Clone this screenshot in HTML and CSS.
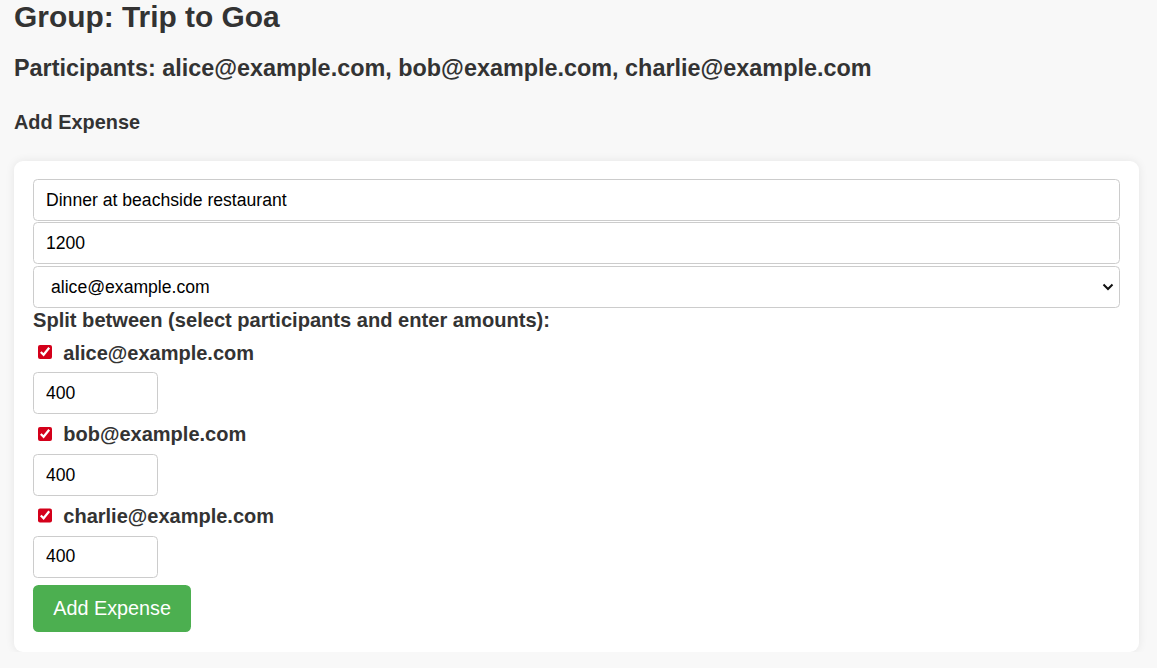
FILE: index.html
```html
<!DOCTYPE html>
<html lang="en">
<head>
<meta charset="utf-8">
<title>Trip to Goa</title>
<link rel="stylesheet" href="styles.css">
</head>
<body>
  <h1 class="group-title">Group: Trip to Goa</h1>
  <h2 class="participants">Participants: alice@example.com, bob@example.com, charlie@example.com</h2>
  <h3 class="section-title">Add Expense</h3>
  <form class="card">
    <input class="field" type="text" value="Dinner at beachside restaurant">
    <input class="field" type="text" value="1200">
    <div class="select-wrap">
      <select class="field select">
        <option>alice@example.com</option>
        <option>bob@example.com</option>
        <option>charlie@example.com</option>
      </select>
      <svg class="chevron" width="12" height="8" viewBox="0 0 12 8"><path d="M1.5 1.5 L6 6 L10.5 1.5" fill="none" stroke="#111" stroke-width="2"/></svg>
    </div>
    <label class="split-label">Split between (select participants and enter amounts):</label>
    <div class="participant">
      <label class="check-row"><input class="check" type="checkbox" checked>alice@example.com</label>
      <input class="amount" type="text" value="400">
    </div>
    <div class="participant">
      <label class="check-row"><input class="check" type="checkbox" checked>bob@example.com</label>
      <input class="amount" type="text" value="400">
    </div>
    <div class="participant">
      <label class="check-row"><input class="check" type="checkbox" checked>charlie@example.com</label>
      <input class="amount" type="text" value="400">
    </div>
    <button class="submit" type="button">Add Expense</button>
  </form>
</body>
</html>
```
FILE: styles.css
```css
html, body {
  margin: 0;
  padding: 0;
}
body {
  background: #f8f8f8;
  color: #333;
  font-family: "Liberation Sans", Arial, sans-serif;
  padding: 0 18px 0 14px;
}
.group-title {
  font-size: 29.9px;
  font-weight: bold;
  margin: 0 0 21px;
  line-height: 34px;
}
.participants {
  font-size: 23.4px;
  font-weight: bold;
  margin: 0 0 29px;
  line-height: 27px;
}
.section-title {
  font-size: 19.9px;
  font-weight: bold;
  margin: 0 0 27px;
  line-height: 23px;
}
.card {
  background: #fff;
  border-radius: 9px;
  box-shadow: 0 0 10px rgba(0, 0, 0, 0.08);
  padding: 18px 19px 19.5px;
  display: flex;
  flex-direction: column;
  align-items: flex-start;
}
.field {
  box-sizing: border-box;
  width: 100%;
  height: 42px;
  margin: 0 0 1.3px;
  padding: 0 12px;
  border: 1px solid #ccc;
  border-radius: 4.5px;
  background: #fff;
  color: #000;
  font-family: "Liberation Sans", Arial, sans-serif;
  font-size: 17.6px;
  outline: none;
}
.select-wrap {
  position: relative;
  width: 100%;
}
.select {
  appearance: none;
  -webkit-appearance: none;
  padding-left: 17px;
  display: block;
}
.chevron {
  position: absolute;
  right: 6px;
  top: 17px;
  pointer-events: none;
}
.split-label {
  font-size: 20.1px;
  font-weight: bold;
  line-height: 22.75px;
  margin: 0 0 1px;
}
.participant {
  display: flex;
  flex-direction: column;
  align-items: flex-start;
}
.check-row {
  display: flex;
  align-items: center;
  font-size: 20px;
  font-weight: bold;
  line-height: 22.75px;
  margin: 9px 0 8px;
}
.check {
  width: 14.3px;
  height: 14.3px;
  margin: 0 11px 2px 5px;
  accent-color: #d4001a;
}
.amount {
  box-sizing: border-box;
  width: 124.5px;
  height: 42px;
  padding: 0 12px;
  border: 1px solid #ccc;
  border-radius: 4.5px;
  color: #000;
  font-family: "Liberation Sans", Arial, sans-serif;
  font-size: 17.6px;
  outline: none;
}
.submit {
  margin-top: 6.7px;
  background: #4caf50;
  color: #fff;
  border: none;
  border-radius: 5.5px;
  font-family: "Liberation Sans", Arial, sans-serif;
  font-size: 19.8px;
  line-height: 22.75px;
  padding: 12.5px 20.3px;
  cursor: pointer;
}
```
